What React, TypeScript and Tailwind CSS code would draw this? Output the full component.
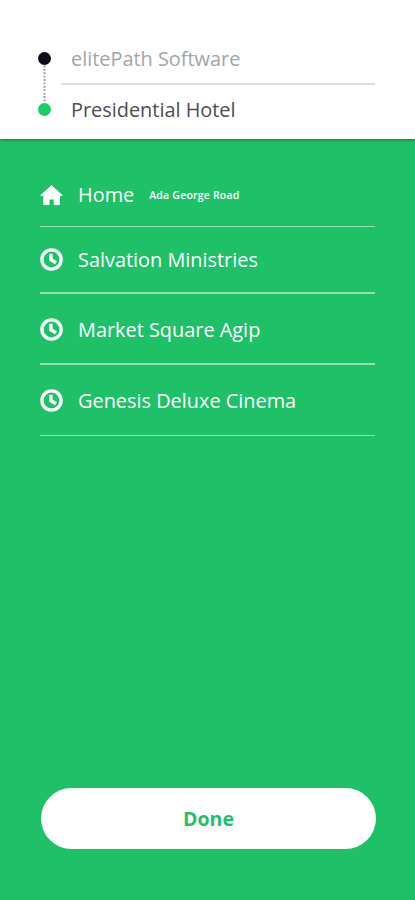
function HomeIcon() {
  return (
    <svg className="w-[23px] h-[21px] shrink-0" viewBox="0 0 23 21" fill="white">
      <path
        d="M11.5 0.6 L22.2 10.4 H19.4 V19.6 H14.2 V14 H9 V19.6 H3.8 V10.4 H0.8 Z"
        stroke="white"
        strokeWidth="1"
        strokeLinejoin="round"
      />
    </svg>
  );
}

function ClockIcon() {
  return (
    <svg className="w-[23px] h-[23px] shrink-0" viewBox="0 0 23 23" fill="none" stroke="white">
      <circle cx="11.5" cy="11.5" r="9.6" strokeWidth="3.4" />
      <path d="M10.9 5.8 V11.8 L16 14.8" strokeWidth="3.4" />
    </svg>
  );
}

export default function App() {
  const places = [
    { name: "Home", detail: "Ada George Road", icon: "home", row: "h-[64px] pt-0.5 border-b", text: "mb-px" },
    { name: "Salvation Ministries", icon: "clock", row: "h-[67px] pb-px border-b-2", text: "mt-0.5" },
    { name: "Market Square Agip", icon: "clock", row: "h-[71px] pt-px border-b-2", text: "mt-0.5" },
    { name: "Genesis Deluxe Cinema", icon: "clock", row: "h-[71px] border-b", text: "mt-0.5" }
  ];

  return (
    <div className="w-full h-[900px] flex flex-col bg-[#1fc168] font-['Open_Sans',sans-serif]">
      {/* Route */}
      <header className="h-[139px] bg-white flex pl-[38px] pr-10 pt-[33px] shadow-[0_1px_3px_rgba(0,60,20,0.5)]">
        <div className="w-[13px] flex flex-col items-center pt-[19px]">
          <div className="w-[13px] h-[13px] rounded-full bg-[#0b0c18]"></div>
          <svg className="w-[3px] h-[38px]" viewBox="0 0 3 38">
            <path d="M1.5 0.5 V38" stroke="#929298" strokeWidth="1.8" strokeDasharray="1.8 1.6" />
          </svg>
          <div className="w-[13px] h-[13px] rounded-full bg-[#18ce68]"></div>
        </div>
        <div className="flex-1 ml-2.5 text-[19.9px]">
          <div className="h-[52px] pl-2.5 pt-px border-b-2 border-[#dfdfdf] flex items-center text-[#a3a5a8]">
            elitePath Software
          </div>
          <div className="h-[50px] pl-2.5 flex items-center text-[#4d4e50]">
            Presidential Hotel
          </div>
        </div>
      </header>

      {/* Saved and recent places */}
      <main className="flex-1 px-10 pt-6">
        {places.map((place) => (
          <div
            key={place.name}
            className={`${place.row} flex items-center border-[#96dfb4] text-white`}
          >
            {place.icon === "home" ? <HomeIcon /> : <ClockIcon />}
            <span className={`${place.text} ml-[15px] text-[19.9px]`}>{place.name}</span>
            {place.detail && (
              <span className="ml-[15px] text-[10.5px] font-semibold tracking-[0.2px]">{place.detail}</span>
            )}
          </div>
        ))}
      </main>

      <footer className="pl-[41px] pr-[39px] pb-[51px]">
        <button className="w-full h-[61px] rounded-full bg-white text-[19.5px] font-bold text-[#1fc168]">
          Done
        </button>
      </footer>
    </div>
  );
}
